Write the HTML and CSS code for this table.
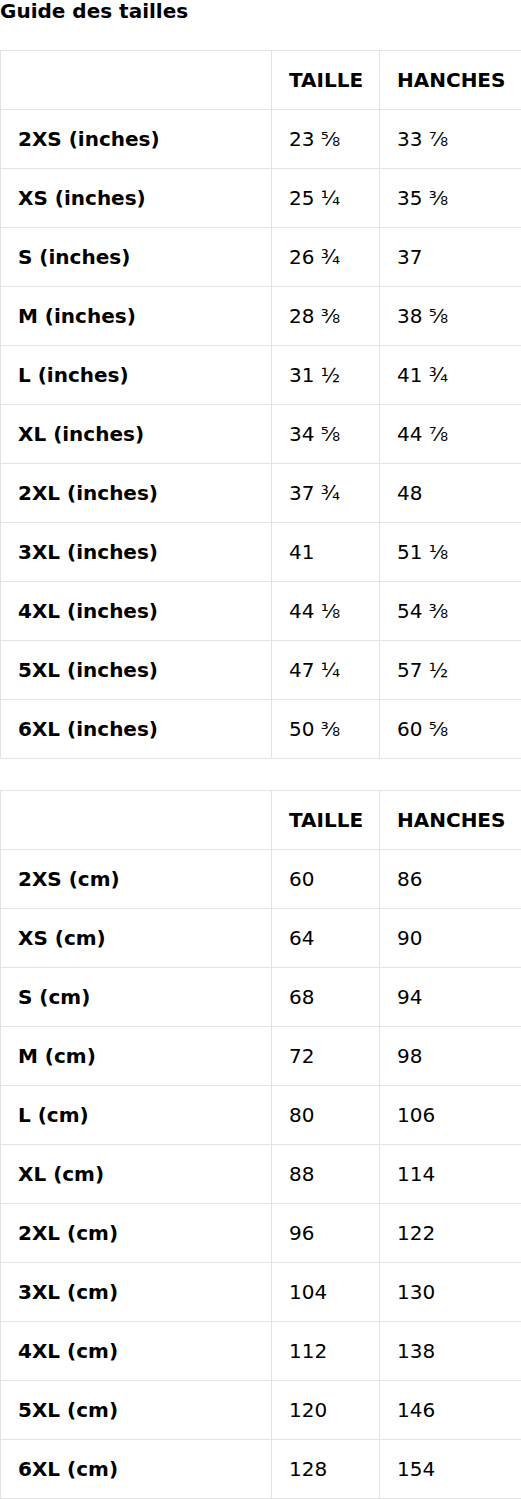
FILE: index.html
```html
<!DOCTYPE html>
<html lang="fr">
<head>
<meta charset="utf-8">
<link rel="stylesheet" href="styles.css">
</head>
<body>
<h2 class="title">Guide des tailles</h2>
<table class="sizes">
<colgroup><col class="c1"><col class="c2"><col class="c3"></colgroup>
<thead><tr><th></th><th>TAILLE</th><th>HANCHES</th></tr></thead>
<tbody>
<tr><th>2XS (inches)</th><td>23 ⅝</td><td>33 ⅞</td></tr>
<tr><th>XS (inches)</th><td>25 ¼</td><td>35 ⅜</td></tr>
<tr><th>S (inches)</th><td>26 ¾</td><td>37</td></tr>
<tr><th>M (inches)</th><td>28 ⅜</td><td>38 ⅝</td></tr>
<tr><th>L (inches)</th><td>31 ½</td><td>41 ¾</td></tr>
<tr><th>XL (inches)</th><td>34 ⅝</td><td>44 ⅞</td></tr>
<tr><th>2XL (inches)</th><td>37 ¾</td><td>48</td></tr>
<tr><th>3XL (inches)</th><td>41</td><td>51 ⅛</td></tr>
<tr><th>4XL (inches)</th><td>44 ⅛</td><td>54 ⅜</td></tr>
<tr><th>5XL (inches)</th><td>47 ¼</td><td>57 ½</td></tr>
<tr><th>6XL (inches)</th><td>50 ⅜</td><td>60 ⅝</td></tr>
</tbody>
</table>
<table class="sizes second">
<colgroup><col class="c1"><col class="c2"><col class="c3"></colgroup>
<thead><tr><th></th><th>TAILLE</th><th>HANCHES</th></tr></thead>
<tbody>
<tr><th>2XS (cm)</th><td>60</td><td>86</td></tr>
<tr><th>XS (cm)</th><td>64</td><td>90</td></tr>
<tr><th>S (cm)</th><td>68</td><td>94</td></tr>
<tr><th>M (cm)</th><td>72</td><td>98</td></tr>
<tr><th>L (cm)</th><td>80</td><td>106</td></tr>
<tr><th>XL (cm)</th><td>88</td><td>114</td></tr>
<tr><th>2XL (cm)</th><td>96</td><td>122</td></tr>
<tr><th>3XL (cm)</th><td>104</td><td>130</td></tr>
<tr><th>4XL (cm)</th><td>112</td><td>138</td></tr>
<tr><th>5XL (cm)</th><td>120</td><td>146</td></tr>
<tr><th>6XL (cm)</th><td>128</td><td>154</td></tr>
</tbody>
</table>
</body>
</html>
```
FILE: styles.css
```css
html, body {
  margin: 0;
  padding: 0;
  background: #fff;
  color: #000;
  font-family: "DejaVu Sans", sans-serif;
}
.title {
  font-size: 20px;
  font-weight: bold;
  line-height: 23px;
  margin: 0 0 27px 0;
}
.sizes {
  border-collapse: collapse;
  width: 521px;
  table-layout: fixed;
  font-size: 20px;
}
.sizes.second {
  margin-top: 31px;
}
.c1 { width: 271px; }
.c2 { width: 108px; }
.c3 { width: 142px; }
.sizes th,
.sizes td {
  border: 1px solid #e3e3e3;
  padding: 17px 17px;
  height: 24px;
  line-height: 24px;
  text-align: left;
  vertical-align: middle;
  white-space: nowrap;
}
.sizes th { font-weight: bold; }
.sizes td { font-weight: normal; }
```
